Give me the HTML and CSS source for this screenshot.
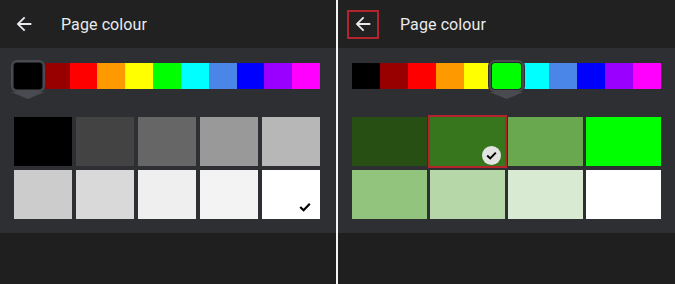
FILE: index.html
```html
<!DOCTYPE html>
<html lang="en">
<head>
    <meta charset="UTF-8">
    <meta name="viewport" content="width=device-width, initial-scale=1.0">
    <title>Page colour</title>
    <link rel="stylesheet" href="styles.css">
</head>
<body>

    <!-- Ecran 1 : nuances de gris -->
    <div class="screen screen-left">
        <div class="topbar">
            <span class="back">
                <svg viewBox="0 0 24 24" width="22" height="22"><path d="M20 11H7.83l5.59-5.59L12 4l-8 8 8 8 1.41-1.41L7.83 13H20v-2z" fill="currentColor"/></svg>
            </span>
            <span class="title">Page colour</span>
        </div>
        <div class="sheet">
            <div class="palette">
                <div class="swatch sel" style="background:#000000"></div>
                <div class="swatch" style="background:#980000"></div>
                <div class="swatch" style="background:#ff0000"></div>
                <div class="swatch" style="background:#ff9900"></div>
                <div class="swatch" style="background:#ffff00"></div>
                <div class="swatch" style="background:#00ff00"></div>
                <div class="swatch" style="background:#00ffff"></div>
                <div class="swatch" style="background:#4a86e8"></div>
                <div class="swatch" style="background:#0000ff"></div>
                <div class="swatch" style="background:#9900ff"></div>
                <div class="swatch" style="background:#ff00ff"></div>
            </div>
            <div class="shades shades-5">
                <div class="shade" style="background:#000000"></div>
                <div class="shade" style="background:#434343"></div>
                <div class="shade" style="background:#666666"></div>
                <div class="shade" style="background:#999999"></div>
                <div class="shade" style="background:#b7b7b7"></div>
                <div class="shade" style="background:#cccccc"></div>
                <div class="shade" style="background:#d9d9d9"></div>
                <div class="shade" style="background:#efefef"></div>
                <div class="shade" style="background:#f3f3f3"></div>
                <div class="shade" style="background:#ffffff">
                    <svg class="tick" viewBox="0 0 12 10" width="12" height="10"><polyline points="1.2,5 4.6,8.2 10.8,1.8" fill="none" stroke="#000" stroke-width="2.2"/></svg>
                </div>
            </div>
        </div>
        <div class="rest"></div>
    </div>

    <div class="divider"></div>

    <!-- Ecran 2 : nuances de vert -->
    <div class="screen screen-right">
        <div class="topbar">
            <span class="back marked">
                <svg viewBox="0 0 24 24" width="22" height="22"><path d="M20 11H7.83l5.59-5.59L12 4l-8 8 8 8 1.41-1.41L7.83 13H20v-2z" fill="currentColor"/></svg>
            </span>
            <span class="title">Page colour</span>
        </div>
        <div class="sheet">
            <div class="palette">
                <div class="swatch" style="background:#000000"></div>
                <div class="swatch" style="background:#980000"></div>
                <div class="swatch" style="background:#ff0000"></div>
                <div class="swatch" style="background:#ff9900"></div>
                <div class="swatch" style="background:#ffff00"></div>
                <div class="swatch sel" style="background:#00ff00"></div>
                <div class="swatch" style="background:#00ffff"></div>
                <div class="swatch" style="background:#4a86e8"></div>
                <div class="swatch" style="background:#0000ff"></div>
                <div class="swatch" style="background:#9900ff"></div>
                <div class="swatch" style="background:#ff00ff"></div>
            </div>
            <div class="shades shades-4">
                <div class="shade" style="background:#274e13"></div>
                <div class="shade marked" style="background:#38761d">
                    <span class="tick-round">
                        <svg viewBox="0 0 12 10" width="11" height="9"><polyline points="1.2,5 4.6,8.2 10.8,1.8" fill="none" stroke="#000" stroke-width="2.2"/></svg>
                    </span>
                </div>
                <div class="shade" style="background:#6aa84f"></div>
                <div class="shade" style="background:#00ff00"></div>
                <div class="shade" style="background:#93c47d"></div>
                <div class="shade" style="background:#b6d7a8"></div>
                <div class="shade" style="background:#d9ead3"></div>
                <div class="shade" style="background:#ffffff"></div>
            </div>
        </div>
        <div class="rest"></div>
    </div>

</body>
</html>
```

FILE: styles.css
```css
html, body {
    height: 100%;
}
body {
    margin: 0;
    display: flex;
    font-family: Roboto, "Liberation Sans", Arial, sans-serif;
    background-color: #1f1f1f;
    overflow: hidden;
}

.screen {
    display: flex;
    flex-direction: column;
    height: 100%;
}
.screen-left {
    width: 336px;
}
.screen-right {
    flex: 1;
}
.divider {
    width: 2px;
    background-color: #f4f4f4;
}

/* barre du haut */
.topbar {
    height: 48px;
    display: flex;
    align-items: center;
    background-color: #212121;
    color: #e8eaed;
}
.back {
    width: 32px;
    height: 29px;
    margin-left: 8px;
    display: flex;
    align-items: center;
    justify-content: center;
    box-sizing: border-box;
}
.back.marked {
    border: 2px solid #b3252c;
    margin-left: 9px;
}
.title {
    margin-left: 21px;
    font-size: 16px;
    letter-spacing: 0.1px;
}

/* zone des couleurs */
.sheet {
    background-color: #2e2f33;
    padding: 15px 16px 14px 14px;
}
.screen-right .sheet {
    padding-right: 14px;
}

.palette {
    display: flex;
    height: 26px;
    margin-bottom: 28px;
}
.swatch {
    flex: 1;
}
.swatch.sel {
    position: relative;
    z-index: 1;
    border-radius: 3px;
    box-shadow: 0 0 0 1px #27282b, 0 0 0 3px #4a4b50, 0 0 0 4px #2e2f33;
}
.swatch.sel::after {
    content: "";
    position: absolute;
    left: -3px;
    right: -3px;
    top: 100%;
    margin-top: 3px;
    height: 7px;
    background-color: #4a4b50;
    clip-path: polygon(0 0, 100% 0, 50% 100%);
}

.shades {
    display: grid;
    grid-auto-rows: 49px;
    column-gap: 4px;
    row-gap: 4px;
}
.shades-5 {
    grid-template-columns: repeat(5, 1fr);
}
.shades-4 {
    grid-template-columns: repeat(4, 1fr);
    column-gap: 3px;
}
.shade {
    position: relative;
}
.shade.marked {
    outline: 2px solid #b3252c;
}
.tick {
    position: absolute;
    right: 9px;
    bottom: 7px;
}
.tick-round {
    position: absolute;
    right: 4px;
    bottom: 1px;
    width: 19px;
    height: 19px;
    border-radius: 50%;
    background-color: #e3e4e1;
    display: flex;
    align-items: center;
    justify-content: center;
}

.rest {
    flex: 1;
    background-color: #1f1f1f;
}
```
